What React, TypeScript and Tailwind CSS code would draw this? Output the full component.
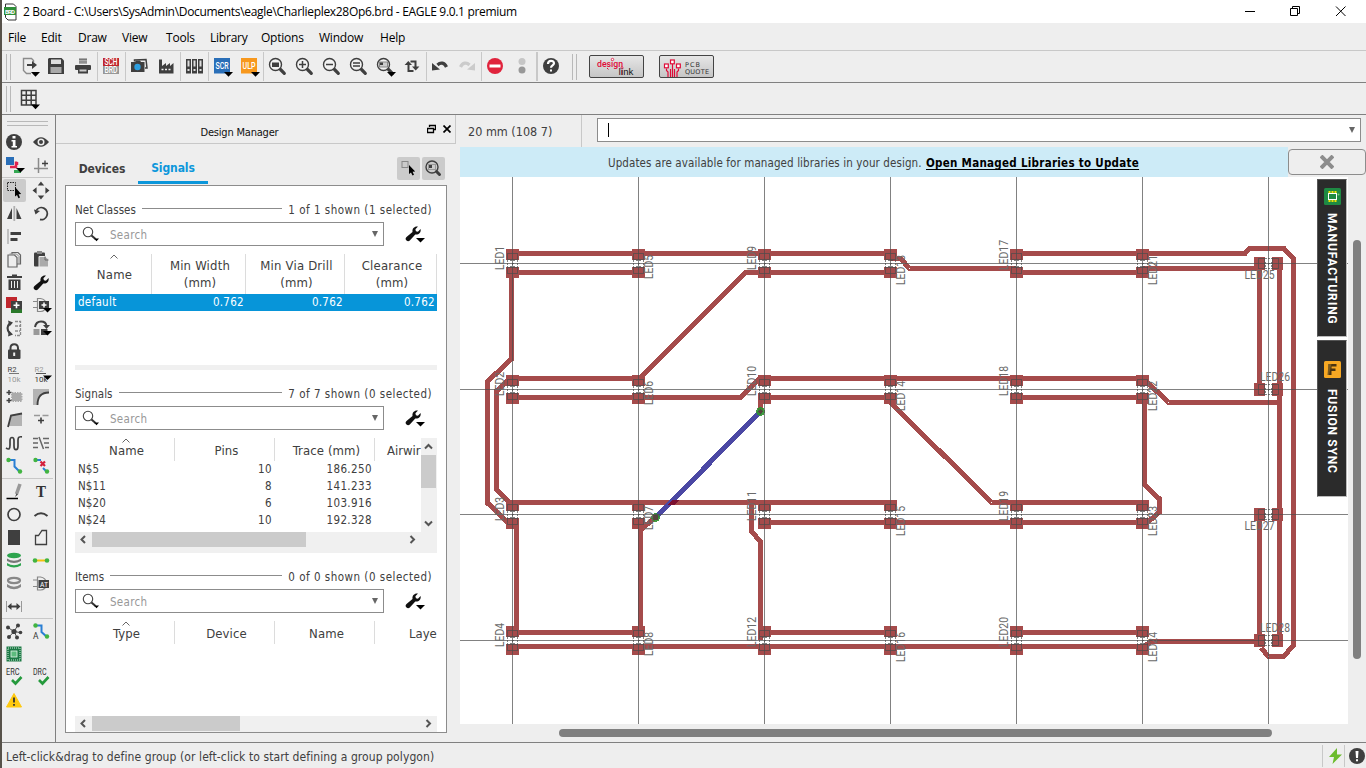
import React from "react";

type Kids = { children?: React.ReactNode };

/* ---------- icon helpers ---------- */
const DK = "#3f3f3f";

function TI({ children }: Kids) {
  return (
    <svg className="block h-[25px] w-[27px] shrink-0" viewBox="0 0 27 25" fill="none">
      {children}
    </svg>
  );
}
const Drop = ({ x = 15, y = 18 }: { x?: number; y?: number }) => (
  <path d={`M${x} ${y}h9l-4.5 4.8z`} fill="#000" />
);
const Sep = () => <div className="h-[29px] w-px bg-[#c8c8c8]" />;
const Handle = () => (
  <div className="flex h-[26px] w-[5px] justify-between">
    <div className="w-px bg-[#b9b9b9]" />
    <div className="w-px bg-[#b9b9b9]" />
  </div>
);
const Lens = ({ children }: Kids) => (
  <TI>
    <path d="M16.5 15.5l3.800 3.800" stroke={DK} strokeWidth="3.200" strokeLinecap="round" />
    <circle cx="11.500" cy="10.500" r="6" stroke={DK} strokeWidth="1.400" fill="#f2f2f2" />
    {children}
  </TI>
);
const Tag = ({ y, s }: { y: number; s: string }) => (
  <text x="6.500" y={y} fontSize="8.500" fill="#fff" fontFamily="Roboto, sans-serif" fontWeight="500" textLength="13" lengthAdjust="spacingAndGlyphs">{s}</text>
);

function MainToolbar() {
  return (
    <div className="flex h-[31px] shrink-0 items-center pl-1">
      <Handle />
      <div className="w-[5px]" />
      <TI>
        <path d="M17.500 8V6.500L15.500 4.500H7.500v12l3 3H15" stroke="#8b8b8b" strokeWidth="1.400" />
        <path d="M11 11h7" stroke={DK} strokeWidth="2" />
        <path d="M16 7l5 4-5 4z" fill={DK} />
        <Drop />
      </TI>
      <TI>
        <path d="M6 4h12.500L21 6.500V20H5V5z" fill={DK} />
        <rect x="8" y="5.500" width="10" height="4.500" fill="#ddd" />
        <rect x="7.500" y="13" width="11" height="6" fill="#a9a9a9" />
      </TI>
      <TI>
        <rect x="9" y="4" width="8" height="6" fill="#aaa" />
        <path d="M9 5.500h8M9 8h8" stroke="#777" />
        <rect x="5" y="11" width="16" height="5" rx="1" fill={DK} />
        <path d="M8 14.500h10v5H8z" fill={DK} />
        <path d="M9.500 16.500h7" stroke="#ccc" strokeWidth="2" />
      </TI>
      <Sep />
      <TI>
        <rect x="5" y="4" width="16" height="8" fill="#c0272d" />
        <rect x="5" y="12" width="16" height="8" fill="#989898" />
        <Tag y={11} s="SCH" />
        <Tag y={19} s="BRD" />
      </TI>
      <Sep />
      <TI>
        <path d="M8.500 7.500V6l11.500-.5 1 8.500h-2" stroke={DK} strokeWidth="1.500" />
        <path d="M5 8h4l1-1.500h4L15 8h3.500v10H5z" fill={DK} />
        <circle cx="11.500" cy="13" r="3.200" fill="#2d9fe0" />
      </TI>
      <TI>
        <path d="M6 5.500h3V12l4-3v3l4-3v3l3.500-3v10.500H6z" fill={DK} />
        <path d="M8.500 15.500h10" stroke="#eee" strokeWidth="1.700" strokeDasharray="2 1.500" />
      </TI>
      <Sep />
      <TI>
        {[5, 11, 17].map((x) => (
          <g key={x}>
            <rect x={x} y="5" width="5" height="14.500" fill={DK} />
            <rect x={x + 1.500} y="6.500" width="2" height="6" fill="#ddd" />
            <rect x={x + 1.500} y="15" width="2" height="2" fill="#ddd" />
          </g>
        ))}
      </TI>
      <Sep />
      <TI>
        <rect x="5" y="4" width="16" height="15.500" fill="#2a6fb8" />
        <Tag y={15} s="SCR" />
        <Drop />
      </TI>
      <TI>
        <rect x="5" y="4" width="16" height="15.500" fill="#f7981d" />
        <Tag y={15} s="ULP" />
        <Drop />
      </TI>
      <Sep />
      <Lens><rect x="8" y="8.500" width="7" height="4.500" fill={DK} /></Lens>
      <Lens><path d="M8 10.500h7M11.500 7v7" stroke={DK} strokeWidth="1.500" /></Lens>
      <Lens><path d="M8 10.500h7" stroke={DK} strokeWidth="1.500" /></Lens>
      <Lens><path d="M8 9h7M8 12h7" stroke={DK} strokeWidth="1.400" /></Lens>
      <Lens>
        <rect x="7.500" y="8" width="8" height="5" stroke="#888" fill="#ccc" />
        <rect x="8" y="8.500" width="3" height="2.500" fill={DK} />
        <Drop />
      </Lens>
      <TI>
        <path d="M11.500 7.500h5V13M14.500 17h-5v-6" stroke={DK} strokeWidth="2" />
        <path d="M13 12.500h7.400l-3.700 4zM5.600 11h7.400L9.300 7z" fill={DK} />
      </TI>
      <Sep />
      <TI>
        <path d="M19.500 13C17.500 8.500 13.500 8 10.500 11" stroke={DK} strokeWidth="3.200" />
        <path d="M5 16.500V9l8 6.500z" fill={DK} />
      </TI>
      <TI>
        <path d="M6.500 13C8.500 8.500 12.500 8 15.500 11" stroke="#cbcbcb" strokeWidth="3.200" />
        <path d="M21 16.500V9l-8 6.500z" fill="#cbcbcb" />
      </TI>
      <Sep />
      <TI>
        <circle cx="13" cy="12" r="8" fill="#e0233c" />
        <rect x="7.500" y="10.500" width="11" height="3" fill="#fff" />
      </TI>
      <TI>
        <circle cx="13" cy="7.500" r="3.500" fill="#c6c6c6" />
        <circle cx="13" cy="16" r="3.500" fill="#989898" />
      </TI>
      <div className="h-[29px] w-0.5 bg-[#c8c8c8]" />
      <TI>
        <circle cx="13" cy="12" r="8" fill={DK} />
        <path d="M10 10c0-4 6-4 6-.7 0 2.200-3 2-3 4.500" stroke="#fff" strokeWidth="2.200" />
        <rect x="12" y="15.500" width="2" height="2" fill="#fff" />
      </TI>
      <div className="w-[7px]" />
      <Handle />
      <div className="ml-[12px] flex h-[23px] w-[55px] items-center rounded-[2px] border border-[#444] bg-gradient-to-b from-[#e6e6e6] to-[#c6c6c6]">
        <svg className="block h-[21px] w-[53px]" viewBox="0 0 53 21">
          <text x="7" y="11" fontSize="9.500" fill="#df0a38" fontFamily="Roboto, sans-serif" fontWeight="500" textLength="26" lengthAdjust="spacingAndGlyphs">design</text>
          <circle cx="22.500" cy="3.500" r="1.200" fill="#fff" stroke="#df0a38" strokeWidth="0.800" />
          <circle cx="32" cy="12" r="1.100" fill="#fff" stroke="#df0a38" strokeWidth="0.800" />
          <path d="M17 12l1.500 1.500M32 14v5" stroke="#df0a38" />
          <text x="28.500" y="19" fontSize="8.500" fill="#222" fontFamily="Roboto, sans-serif" textLength="15" lengthAdjust="spacingAndGlyphs">link</text>
        </svg>
      </div>
      <div className="ml-[15px] flex h-[23px] w-[55px] items-center rounded-[2px] border border-[#444] bg-gradient-to-b from-[#e6e6e6] to-[#c6c6c6]">
        <svg className="block h-[21px] w-[53px]" viewBox="0 0 53 21" fill="none">
          <path d="M6.500 12.500v2l1.500 1.500v5M10.500 13v8M12.500 8v13M14.500 13v8M18.500 12.500v2L17 16v5" stroke="#df0a38" strokeWidth="1.200" />
          <g fill="#fff" stroke="#df0a38" strokeWidth="1.200">
            <rect x="4.500" y="8" width="3.800" height="3.800" />
            <rect x="10.500" y="4" width="3.800" height="3.800" />
            <rect x="16.500" y="8" width="3.800" height="3.800" />
          </g>
          <text x="25" y="11" fontSize="6.500" fill="#333" fontFamily="DejaVu Sans, sans-serif" textLength="15">PCB</text>
          <text x="25" y="18" fontSize="6.500" fill="#333" fontFamily="DejaVu Sans, sans-serif" textLength="24">QUOTE</text>
        </svg>
      </div>
    </div>
  );
}

/* ---------- left tool palette ---------- */
function B({ children, on }: Kids & { on?: boolean }) {
  return (
    <div className={on ? "h-[23px] w-[23px] rounded-[2px] bg-[#cbcbcb]" : "h-[23px] w-[23px]"}>
      {children ? (
        <svg className="block h-[23px] w-[23px] overflow-visible" viewBox="0 0 23 23" fill="none">
          {children}
        </svg>
      ) : null}
    </div>
  );
}
const SDrop = () => <path d="M13 14h9l-4.500 4.600z" fill="#000" />;
const WRENCH = "M4.500 18.500c-1.500-1.500-.8-2.800 0-3.500l6-5C10 6.500 12.500 4 16 4.600l-2.600 2.700.5 2 2 .5L18.600 7c.7 3.500-2 6-5.300 5.500l-5.500 6c-1 1-2.300 1-3.300 0z";
const Txt = ({ x, y, s, w, f, c }: { x: number; y: number; s: string; w: number; f: number; c: string }) => (
  <text x={x} y={y} fontSize={f} fill={c} textLength={w} lengthAdjust="spacingAndGlyphs" fontFamily="Roboto, sans-serif">{s}</text>
);

function Palette() {
  return (
    <div className="flex w-[54px] shrink-0 flex-col border-r border-[#808080]">
      <div className="ml-[5px] mr-[7px] mt-[6px] h-[5px] border-y border-[#b9b9b9]" />
      <div className="mt-[5px] grid grid-cols-[23px_23px] gap-x-1 pl-px">
        <B>
          <circle cx="11" cy="11" r="8" fill={DK} />
          <rect x="9.500" y="5" width="3" height="2.500" fill="#fff" />
          <path d="M8.500 9h4v6H14v1.500H8.500V15h1.300v-4.500H8.500z" fill="#fff" />
        </B>
        <B>
          <path d="M3 11Q11 1.500 19 11Q11 20.500 3 11z" fill={DK} />
          <circle cx="11" cy="11" r="3.500" fill="#eee" />
          <circle cx="11" cy="11" r="2" fill={DK} />
        </B>
        <B>
          <rect x="3" y="3" width="8" height="8" fill="#2a6fb8" />
          <path d="M7 13h6V7.500M14 8v3" stroke="#e0234f" strokeWidth="2.500" />
          <path d="M11 17.500h7" stroke="#34a853" strokeWidth="3" />
          <SDrop />
        </B>
        <B>
          <path d="M8.500 4v15M4 14.500h14" stroke="#8b8b8b" strokeWidth="1.500" />
          <path d="M12 9.500h6M15 6.500v6" stroke={DK} strokeWidth="1.300" />
        </B>
      </div>
      <div className="mb-px mr-0.5 h-px bg-[#c8c8c8]" />
      <div className="grid grid-cols-[23px_23px] gap-x-1 pl-px">
        <B on>
          <rect x="4.500" y="3.500" width="8" height="8" stroke="#222" strokeDasharray="1.500 1" />
          <path d="M12 8v9.500l2-1.600 1.500 3.300 1.500-.8-1.400-3.100 2.600-.3z" fill="#000" />
        </B>
        <B>
          <path d="M11 3.500l2 2.500H9zM11 19.500l2-2.500H9zM3.500 11.500L6 9.500v4zM18.500 11.500L16 9.500v4z" fill={DK} stroke={DK} strokeWidth="1.200" />
        </B>
        <B>
          <path d="M9 6v11H4zM13.500 6v11h5z" fill={DK} />
          <path d="M11.300 4v15" stroke="#b0b0b0" strokeWidth="1.800" />
        </B>
        <B>
          <path d="M6.500 8A6 6 0 1 1 10 17.500" stroke={DK} strokeWidth="1.800" />
          <path d="M4 7.500l6 1.500-4.500 3.500z" fill={DK} />
        </B>
        <B>
          <path d="M5 4v15" stroke="#b0b0b0" strokeWidth="1.500" />
          <path d="M7.500 8.500h10.500M7.500 14.500h7" stroke={DK} strokeWidth="3" />
        </B>
        <B />
        <B>
          <path d="M9 6V4.500h6l2.500 2.500v9H14M5 7h6.500L14 9.500V19H5z" stroke="#666" strokeWidth="1.200" />
          <path d="M6.500 6h7L16 8.500V16" stroke="#888" />
        </B>
        <B>
          <rect x="4" y="4.500" width="11" height="14" rx="1" fill={DK} />
          <rect x="7" y="3" width="5" height="3" fill="#888" />
          <path d="M9 8.500h6.500L18.500 11v8H9z" fill="#aaa" stroke="#eee" />
          <path d="M15 8.500V12h3.500" stroke="#666" />
        </B>
        <B>
          <path d="M4 5h15v2H4zM9 3.500h5V5H9zM5.500 8.500h12V19h-12z" fill={DK} />
          <path d="M8.500 10v7M11.500 10v7M14.500 10v7" stroke="#eee" />
        </B>
        <B><path d={WRENCH} fill="#111" /></B>
        <B>
          <rect x="3" y="3" width="11" height="11" fill="#c0272d" />
          <rect x="8" y="14" width="11" height="5" fill="#2b7a2b" />
          <rect x="8" y="7" width="11" height="8.500" fill={DK} />
          <path d="M10.500 11.200h6M13.500 8.300v6" stroke="#fff" strokeWidth="1.600" />
        </B>
        <B>
          <path d="M3 7.500h5M3 13.500h5M7.500 4.500v13h3q5 0 6.500-6.500Q15.500 5 10.500 4.500z" stroke="#888" strokeWidth="1.200" />
          <rect x="9" y="7" width="10" height="8" fill={DK} />
          <path d="M11.500 11h5M14 8.500v5" stroke="#fff" strokeWidth="1.500" />
          <SDrop />
        </B>
        <B>
          <path d="M7 6q-5 5 0 11" stroke={DK} strokeWidth="2" />
          <path d="M5 3.500l5 2-3.500 4zM5 19.500l5-2-4-4z" fill={DK} />
          <path d="M12 4.500h5.500v14H12M12 9h5M12 14h5" stroke="#8b8b8b" strokeWidth="1.300" strokeDasharray="3 1" />
        </B>
        <B>
          <path d="M5 10Q6 4.500 11 4.500T16.500 9" stroke={DK} strokeWidth="2" />
          <path d="M13 8h7l-3.500 4z" fill={DK} />
          <rect x="3.500" y="12" width="6" height="6" fill="#999" />
          <rect x="11" y="12" width="6.500" height="6" fill={DK} />
          <SDrop />
        </B>
        <B>
          <path d="M7.500 10.500V8q0-3.700 3.700-3.700T15 8v2.500" stroke={DK} strokeWidth="2" />
          <rect x="5" y="9.500" width="12.500" height="9.500" rx="1" fill={DK} />
          <path d="M11.200 12.500v3.500" stroke="#eee" strokeWidth="2" />
        </B>
        <B />
        <B>
          <Txt x={4.500} y={8.500} s="R2" w={9} f={7.500} c="#444" />
          <path d="M6 10.500h10" stroke="#777" />
          <Txt x={4.500} y={18.500} s="10k" w={13} f={8} c="#999" />
        </B>
        <B>
          <Txt x={4.500} y={8.500} s="R2" w={9} f={7.500} c="#999" />
          <path d="M6 10.500h10" stroke="#555" />
          <Txt x={4.500} y={18.500} s="10k" w={13} f={8} c="#333" />
          <path d="M13 12.500h9l-4.500 4.500z" fill="#000" />
        </B>
        <B>
          <rect x="9" y="7" width="9.500" height="8" fill="#aaa" stroke="#aaa" strokeDasharray="1.500 1" strokeWidth="2" />
          <path d="M3.500 6.500h5M6 4v5M3.500 14.500h5M6 12v5" stroke={DK} strokeWidth="1.500" />
        </B>
        <B>
          <path d="M3 19V3h16v3Q7 6 7 19z" fill="#b3b3b3" />
          <path d="M7.500 19Q7.500 6.500 19 6.500" stroke={DK} strokeWidth="1.800" />
        </B>
        <B>
          <path d="M5 17L8 6l11-2v13z" fill="#b3b3b3" />
          <path d="M5 18L8 6.500l11-2" stroke={DK} strokeWidth="1.800" />
        </B>
        <B>
          <path d="M4 6.500h6M12.500 6.500h6" stroke="#999" strokeWidth="1.300" />
          <path d="M8 11.500h6M11 8.500v6" stroke={DK} strokeWidth="1.600" />
        </B>
        <B>
          <path d="M3 16c3 2 4 1 4-3V8.500c0-4 4-4 4 0V14c0 5 4 5 4 0V8c0-3 1.500-3.500 4-3.200" stroke={DK} strokeWidth="1.700" />
        </B>
        <B>
          <path d="M3 6.500h5M3 11h5M3 15.500h5M13 6.500h6M14 11h5M15 15.500h4M9 5l4.500 12" stroke="#666" strokeWidth="1.500" />
        </B>
        <B>
          <path d="M6 5h5.500v6.500l5.500 5.500" stroke="#2a7fd4" strokeWidth="2" />
          <circle cx="5.500" cy="5" r="2.200" fill="#41b441" />
          <circle cx="17" cy="16.500" r="2.200" fill="#41b441" />
        </B>
        <B>
          <path d="M6 5h5M13 13l4 4" stroke="#2a7fd4" strokeWidth="2" />
          <circle cx="5.500" cy="5" r="2.200" fill="#41b441" />
          <circle cx="17" cy="16.500" r="2.200" fill="#41b441" />
          <path d="M10.500 6.500l4.500 4.500M15 6.500L10.500 11" stroke="#d3203a" strokeWidth="2.200" />
        </B>
      </div>
      <div className="mb-px mr-0.5 h-px bg-[#c8c8c8]" />
      <div className="grid grid-cols-[23px_23px] gap-x-1 pl-px">
        <B>
          <path d="M17 4l-3.500 10" stroke="#999" strokeWidth="3.500" />
          <path d="M13.500 13.500l-1.500 3.500 3-2.500z" fill="#444" />
          <path d="M3.500 18.500H15" stroke="#000" strokeWidth="1.500" />
        </B>
        <B>
          <text x="11" y="17" fontSize="16.500" fill="#333" textAnchor="middle" fontFamily="Liberation Serif, serif" fontWeight="700" textLength="10" lengthAdjust="spacingAndGlyphs">T</text>
        </B>
        <B><circle cx="11" cy="11.500" r="6" stroke={DK} strokeWidth="1.700" /></B>
        <B><path d="M4.500 13q6.500-5.500 13 0" stroke={DK} strokeWidth="2" /></B>
        <B><rect x="5" y="4" width="12" height="15" fill={DK} /></B>
        <B><path d="M5.500 18.500v-9h3l3.500-5h4.500v14z" stroke={DK} strokeWidth="1.300" /></B>
        <B>
          <ellipse cx="11" cy="6.500" rx="7" ry="2.800" fill="#2da44e" />
          <path d="M4 9.500q7 4.500 14 0v2.500q-7 4-14 0z" fill="#777" />
          <path d="M4 14q7 4.500 14 0v2.500q-7 4-14 0z" fill="#2da44e" />
        </B>
        <B>
          <path d="M5 11.500h12" stroke="#f4c20d" strokeWidth="2" />
          <circle cx="5" cy="11.500" r="2.300" fill="#41b441" />
          <circle cx="17" cy="11.500" r="2.300" fill="#41b441" />
        </B>
        <B>
          <path d="M4 12q7 5.500 14 0v3q-7 4.500-14 0z" fill="#888" />
          <ellipse cx="11" cy="8.500" rx="6" ry="2.600" stroke="#888" strokeWidth="2.200" />
        </B>
        <B>
          <path d="M3 8h5M3 14.500h5M7.500 5v13h3q5 0 6.500-6.500Q15.500 5.500 10.500 5z" stroke="#888" strokeWidth="1.200" />
          <rect x="8.500" y="8" width="10.500" height="8" fill={DK} />
          <Txt x={10} y={14.800} s="AT" w={8} f={7.500} c="#fff" />
        </B>
        <B>
          <path d="M3.500 6v11M18.500 6v11" stroke="#999" />
          <path d="M6 11.500h10" stroke={DK} strokeWidth="2" />
          <path d="M4.500 11.500l4-3.500v7zM17.500 11.500l-4-3.500v7z" fill={DK} />
        </B>
        <B />
      </div>
      <div className="mb-px mr-0.5 h-px bg-[#c8c8c8]" />
      <div className="grid grid-cols-[23px_23px] gap-x-1 pl-px">
        <B>
          <path d="M11 11.500L5 7.500M11 11.500L15 5M11 11.500l6 1M11 11.500L6 17M11 11.500l3 6" stroke={DK} strokeWidth="0.900" />
          <g fill={DK}>
            <circle cx="11" cy="11.500" r="2.600" /><circle cx="5" cy="7.500" r="2" /><circle cx="15" cy="5.500" r="2" />
            <circle cx="17.500" cy="12.500" r="1.800" /><circle cx="6" cy="17" r="2" /><circle cx="14" cy="17.500" r="2" />
          </g>
        </B>
        <B>
          <path d="M6 5.500h5.500V12l5.500 5" stroke="#2a7fd4" strokeWidth="2" />
          <circle cx="5.500" cy="5.500" r="2.200" fill="#41b441" />
          <circle cx="17" cy="16.500" r="2.200" fill="#41b441" />
          <Txt x={3} y={19} s="A" w={5.500} f={9} c="#333" />
        </B>
        <B>
          <rect x="3.500" y="3.500" width="15" height="15" fill="#1c7a45" />
          <rect x="5" y="5" width="12" height="12" stroke="#e5f5ea" strokeWidth="0.900" strokeDasharray="1 1" />
          <rect x="8" y="8" width="6" height="6" fill="#5dbb7d" stroke="#e5f5ea" strokeWidth="0.800" />
        </B>
        <B />
        <B>
          <Txt x={3} y={9} s="ERC" w={13.500} f={9} c="#333" />
          <path d="M9 14l3.500 3.500 6-6.500" stroke="#259a3c" strokeWidth="2.600" />
        </B>
        <B>
          <Txt x={3} y={9} s="DRC" w={13.500} f={9} c="#333" />
          <path d="M9 14l3.500 3.500 6-6.500" stroke="#259a3c" strokeWidth="2.600" />
        </B>
        <B>
          <path d="M11 4.500l7.500 13.500h-15z" fill="#ffc90e" stroke="#ffc90e" strokeWidth="1" strokeLinejoin="round" />
          <path d="M11 8.500v5M11 15v1.800" stroke="#333" strokeWidth="1.800" />
        </B>
        <B />
      </div>
    </div>
  );
}

/* ---------- design manager ---------- */
function SectionTitle({ name, info }: { name: string; info: string }) {
  return (
    <div className="flex h-4 items-center pr-[5px]">
      <span className="tracking-[0.05px]">{name}</span>
      <div className="relative -top-0.5 mx-1.5 h-px flex-1 bg-[#8c8c8c]" />
      <span className="w-[144px] whitespace-nowrap text-right tracking-[0.5px]">{info}</span>
    </div>
  );
}

function SearchRow() {
  return (
    <div className="flex h-6 items-center">
      <div className="flex h-6 w-[309px] items-center border border-[#8c8c8c] bg-white pl-[6px] pr-[5px]">
        <svg className="h-[18px] w-[20px]" viewBox="0 0 20 18" fill="none">
          <circle cx="6" cy="7" r="4.700" stroke="#444" strokeWidth="1.100" />
          <path d="M9.500 10.500l4 3.500" stroke="#333" strokeWidth="2" />
          <path d="M12 13.500h5l-2.500 2.700z" fill="#000" />
        </svg>
        <span className="ml-2 flex-1 pt-px tracking-[0.3px] text-[#989898]">Search</span>
        <svg className="h-[6px] w-[6px]" viewBox="0 0 6 6"><path d="M0 0h6L3 6z" fill="#666" /></svg>
      </div>
      <svg className="ml-[18px] h-6 w-[24px]" viewBox="0 0 24 24">
        <path d={WRENCH} fill="#111" />
        <path d="M14 16h9l-4.500 4.600z" fill="#000" />
      </svg>
    </div>
  );
}

const Caret = () => (
  <svg className="absolute left-1/2 top-0 -ml-[3px] h-[5px] w-2" viewBox="0 0 8 5" fill="none">
    <path d="M.5 4.500L4 1l3.500 3.500" stroke="#666" />
  </svg>
);
const Arr = ({ d }: { d: string }) => (
  <svg className="block h-[9px] w-[9px]" viewBox="0 0 9 9" fill="none">
    <path d={d} stroke="#555" strokeWidth="2" />
  </svg>
);
const LEFT = "M6 1L2.500 4.500 6 8";
const RIGHT = "M3.500 1L7 4.500 3.500 8";

const signals = [
  ["N$5", "10", "186.250"],
  ["N$11", "8", "141.233"],
  ["N$20", "6", "103.916"],
  ["N$24", "10", "192.328"],
];

function DesignManager() {
  const head = "flex h-[40px] flex-col items-center justify-center border-r border-[#dcdcdc] pl-[3px] text-[13px] leading-[17px] tracking-[0.2px]";
  const head2 = "relative flex h-[23px] items-center justify-center border-r border-[#dcdcdc] pl-[4px] pt-[2px] text-[13px] tracking-[0.1px]";
  return (
    <div className="flex w-[404px] shrink-0 flex-col">
      <div className="flex h-[29px] w-[400px] items-center border-b border-r border-[#c8c8c8] text-[11px] text-[#111]">
        <span className="w-[367px] pt-[8px] text-center tracking-[-0.2px]">Design Manager</span>
        <svg className="ml-[4px] h-[10px] w-[9px]" viewBox="0 0 9 10" fill="none" stroke="#000">
          <path d="M2.500 3V1.500h6v4H7M2.500 1.500h6" strokeWidth="1.300" />
          <path d="M.5 4.500h6v4h-6z" strokeWidth="1.300" />
        </svg>
        <svg className="ml-[7px] h-[8px] w-[8px]" viewBox="0 0 8 8" stroke="#000" strokeWidth="1.700">
          <path d="M.5.500l7 7M7.500.500l-7 7" />
        </svg>
      </div>
      <div className="flex h-[41px] items-end pl-[12px]">
        <div className="mr-0.5 h-[30px] w-[68px] pt-[6px] text-center text-[12px] font-bold tracking-[-0.1px]">Devices</div>
        <div className="mb-px h-[30px] w-[70px] border-b-[3px] border-[#0c97db] pt-[6px] text-center text-[12px] font-bold tracking-[-0.1px] text-[#0c97db]">Signals</div>
        <div className="mb-[5px] ml-[189px] flex gap-0.5">
          <svg className="h-[23px] w-[23px] rounded-[2px] bg-[#cbcbcb]" viewBox="0 0 23 23" fill="none">
            <rect x="5" y="4.500" width="6" height="6" stroke="#888" />
            <path d="M12 8v9l2-1.600 1.500 3 1.500-.7-1.400-2.900 2.600-.3z" fill="#000" />
          </svg>
          <svg className="h-[23px] w-[23px] rounded-[2px] bg-[#cbcbcb]" viewBox="0 0 23 23" fill="none">
            <circle cx="10" cy="10" r="6" stroke={DK} strokeWidth="1.400" />
            <path d="M14.500 14.500l3 3" stroke={DK} strokeWidth="3" strokeLinecap="round" />
            <rect x="6.500" y="7.500" width="7" height="5" stroke="#999" />
            <rect x="7" y="8" width="3" height="3" fill={DK} />
          </svg>
        </div>
      </div>
      <div className="ml-[9px] flex h-[548px] w-[382px] flex-col border border-[#8c8c8c] bg-white pl-[9px] pr-[9px] pt-[16px]">
        <SectionTitle name="Net Classes" info="1 of 1 shown (1 selected)" />
        <div className="h-[4px]" />
        <SearchRow />
        <div className="mt-2 grid grid-cols-[77px_94px_99px_92px]">
          <div className={head + " relative pt-px"}><Caret />Name</div>
          <div className={head}><span>Min Width</span><span>(mm)</span></div>
          <div className={head}><span>Min Via Drill</span><span>(mm)</span></div>
          <div className={head}><span>Clearance</span><span>(mm)</span></div>
        </div>
        <div className="grid h-[17px] grid-cols-[77px_94px_99px_92px] items-center bg-[#0795d9] pb-0.5 tracking-[0.3px] text-white">
          <span className="pl-[3px]">default</span>
          <span className="pr-[2px] text-right">0.762</span>
          <span className="pr-[2px] text-right">0.762</span>
          <span className="pr-[2px] text-right">0.762</span>
        </div>
        <div className="mt-[54px] h-[5px] bg-[#f0f0f0]" />
        <div className="h-4" />
        <SectionTitle name="Signals" info="7 of 7 shown (0 selected)" />
        <div className="h-[4px]" />
        <SearchRow />
        <div className="mt-2 flex h-[94px]">
          <div className="w-[346px] overflow-hidden">
            <div className="grid w-[400px] grid-cols-[100px_100px_100px_100px]">
              <div className={head2}><Caret />Name</div>
              <div className={head2}>Pins</div>
              <div className={head2}>Trace (mm)</div>
              <div className="flex h-[23px] items-center pl-[12px] pt-[2px] text-[13px]">Airwir</div>
            </div>
            <div className="-mt-px">
              {signals.map((r) => (
                <div key={r[0]} className="grid h-[17px] w-[400px] grid-cols-[100px_100px_100px_100px] items-center tracking-[0.4px]">
                  <span className="pl-[3px] tracking-[0.1px]">{r[0]}</span>
                  <span className="pr-[3px] text-right">{r[1]}</span>
                  <span className="pr-[3px] text-right">{r[2]}</span>
                </div>
              ))}
            </div>
          </div>
          <div className="flex w-4 flex-col items-center bg-[#f0f0f0]">
            <div className="flex h-[17px] items-center pr-px"><Arr d="M1 6.500L4.500 3 8 6.500" /></div>
            <div className="h-[33px] w-[15px] self-start bg-[#cbcbcb]" />
            <div className="mt-auto flex h-[17px] items-center pr-px"><Arr d="M1 2.500L4.500 6 8 2.500" /></div>
          </div>
        </div>
        <div className="h-[21px] bg-[#f0f0f0]">
          <div className="flex h-[15px] w-[346px] items-center">
            <div className="w-[17px] pl-1"><Arr d={LEFT} /></div>
            <div className="h-[15px] w-[214px] bg-[#cbcbcb]" />
            <div className="ml-auto w-[14px]"><Arr d={RIGHT} /></div>
          </div>
        </div>
        <div className="h-4" />
        <SectionTitle name="Items" info="0 of 0 shown (0 selected)" />
        <div className="h-[4px]" />
        <SearchRow />
        <div className="mt-2 h-[95px] overflow-hidden">
          <div className="grid w-[400px] grid-cols-[100px_100px_100px_100px]">
            <div className={head2}><Caret />Type</div>
            <div className={head2}>Device</div>
            <div className={head2}>Name</div>
            <div className="flex h-[23px] items-center pl-[34px] pt-[2px] text-[13px]">Laye</div>
          </div>
        </div>
        <div className="h-[16px] bg-[#f0f0f0]">
          <div className="flex h-[15px] items-center">
            <div className="w-[17px] pl-1"><Arr d={LEFT} /></div>
            <div className="h-[15px] w-[148px] bg-[#cbcbcb]" />
            <div className="ml-auto w-[14px]"><Arr d={RIGHT} /></div>
          </div>
        </div>
      </div>
    </div>
  );
}

/* ---------- board drawing ---------- */
const cols = [512.5, 638.5, 764.5, 890.5, 1016.5, 1142.5];
const rows = [263.5, 389.5, 514.5, 640.5];
const traces = [
  "M512 253.500H890",
  "M512 272.500H638",
  "M890 272.500H746L640 378",
  "M890 258.500H900.500L909.500 268.500H1016",
  "M1016 272.500H1142",
  "M1142 268.500H1257",
  "M1016 253.500H1245L1249.500 248.500H1284L1293.500 258.500V645.500L1283.500 656.500H1268.500L1261 648",
  "M1259.500 263V389M1279.500 263V640M1259.500 514V640",
  "M1144 379L1168.500 402.500H1279",
  "M512 378.500H638",
  "M512 397.500H740.500L759.500 378.500H1142",
  "M764 397.500H890M1016 397.500H1142",
  "M891 403L991.500 502.500H1142",
  "M512 502.500H890",
  "M764 522.500H1142",
  "M1144.500 400V484.500L1159.500 499V512L1147 523",
  "M511.500 272V359L487.500 381.500V503L508 523",
  "M508 380L496.500 391V489.500L510 502.500",
  "M516.500 520V632",
  "M655 517.500L640.500 530V632",
  "M751.500 502V531.500L760.500 541.500V640",
  "M512 632.500H638M764 632.500H890M1016 632.500H1142",
  "M512 646.500H1144L1151 641.500H1258",
  "M760.500 398V411",
];

function Led({ x, y, r }: { x: number; y: number; r?: boolean }) {
  return (
    <g transform={`translate(${x} ${y})${r ? " rotate(-90)" : ""}`}>
      <g fill="#a54b4b">
        <rect x="-6.500" y="-14.500" width="13" height="11" />
        <rect x="-6.500" y="3.500" width="13" height="11" />
      </g>
      <g stroke="#4c4c4c" fill="none" strokeOpacity="0.700">
        <rect x="-5" y="-10" width="10" height="6" />
        <rect x="-5" y="4" width="10" height="6" />
        <path d="M-5-4V4M5-4V4M-3-3h6M-3 3h6" strokeDasharray="2 1" />
        <path d="M-1 0h2M0-1v2" strokeWidth="1.500" />
      </g>
    </g>
  );
}

function Board() {
  return (
    <svg className="block h-[547px] w-[888px] bg-white" viewBox="460 177 888 547" fill="none" shapeRendering="crispEdges">
      <g stroke="#a54b4b" strokeWidth="5">
        {traces.map((d) => <path key={d} d={d} />)}
      </g>
      {cols.map((x) => rows.map((y) => <Led key={`${x}-${y}`} x={x} y={y} />))}
      {rows.map((y) => <Led key={y} x={1268.5} y={y} r />)}
      <path d="M760.500 411.500L655.500 517.500" stroke="#4b48a4" strokeWidth="5" />
      <path d="M667 505h7l5-5h-7z" fill="#7b1030" />
      <g fill="#2f8f2f" fillOpacity="0.900">
        <circle cx="760.500" cy="411.500" r="4.300" />
        <circle cx="655.500" cy="517.500" r="4.300" />
      </g>
      <g fill="#55443f">
        <circle cx="760.500" cy="411.500" r="2.300" />
        <circle cx="655.500" cy="517.500" r="2.800" />
      </g>
      <g stroke="#4c4c4c" strokeOpacity="0.700">
        {[...cols, 1268.5].map((x) => <path key={x} d={`M${x} 177V724`} />)}
        {rows.map((y) => <path key={y} d={`M460 ${y}H1348`} />)}
      </g>
      <g fill="#6a6a6a" fontFamily="Roboto, sans-serif" fontSize="12" fontWeight="400">
        {cols.map((x, c) =>
          rows.map((y, r) => {
            const n = c * 4 + r + 1;
            const bx = c % 2 === 0 ? x - 9 : x + 14.5;
            const by = c % 2 === 0 ? y + 6.5 : y + (n > 9 ? 21.5 : 15.5);
            return (
              <text key={n} transform={`translate(${bx} ${by}) rotate(-90)`} textLength={n > 9 ? 30 : 24} lengthAdjust="spacingAndGlyphs">{`LED${n}`}</text>
            );
          })
        )}
        {rows.map((y, r) => (
          <text key={y} x={r % 2 === 0 ? 1244.5 : 1260} y={r % 2 === 0 ? y + 15.5 : y - 8.5} textLength="30" lengthAdjust="spacingAndGlyphs">{`LED${25 + r}`}</text>
        ))}
      </g>
    </svg>
  );
}

function SideTab({ children, label, cls }: Kids & { label: string; cls: string }) {
  return (
    <div className={"flex w-[30px] flex-col items-center border border-[#555] border-r-[#bbb] border-b-[#bbb] bg-[#2b2b2b] " + cls}>
      {children}
      <span className="whitespace-nowrap font-['Roboto',sans-serif] text-[12px] font-bold text-white [writing-mode:vertical-rl]">{label}</span>
    </div>
  );
}

function Workspace() {
  return (
    <div className="flex min-w-0 flex-1 flex-col">
      <div className="flex h-[32px] items-center">
        <div className="flex h-[32px] w-[122px] items-center border-r border-[#c8c8c8] pl-2 pt-0.5 text-[12.500px]">20 mm (108 7)</div>
        <div className="ml-[15px] mt-[-2px] flex h-6 w-[764px] items-center justify-between border border-[#8c8c8c] bg-white pl-[10px] pr-[5px]">
          <div className="h-[14px] w-px bg-black" />
          <svg className="h-[6px] w-[6px]" viewBox="0 0 6 6"><path d="M0 0h6L3 6z" fill="#666" /></svg>
        </div>
      </div>
      <div className="flex h-[30px]">
        <div className="flex w-[828px] items-center whitespace-pre bg-[#cdebf7] pl-[148px] pt-0.5">
          <span className="w-[318px] tracking-[0.1px]">Updates are available for managed libraries in your design.</span>
          <span className="font-bold tracking-[0.28px] text-black underline underline-offset-2">Open Managed Libraries to Update</span>
        </div>
        <div className="mt-0.5 flex h-[26px] w-[78px] items-center justify-center rounded-[4px] border border-[#8c8c8c]">
          <svg className="h-[14px] w-[14px]" viewBox="0 0 14 14" stroke="#8c8c8c" strokeWidth="4"><path d="M1 1l12 12M13 1L1 13" /></svg>
        </div>
      </div>
      <div className="relative flex h-[547px]">
        <Board />
        <div className="absolute left-[857px] top-[2px] flex flex-col gap-[3px]">
          <SideTab label="MANUFACTURING" cls="h-[158px] gap-[8px] pt-[8px] tracking-[0.95px]">
            <svg className="h-[17px] w-[17px] shrink-0" viewBox="0 0 17 17" fill="none">
              <rect width="17" height="17" rx="1.500" fill="#1e8a43" />
              <path d="M5.500 3v11M8.500 3v11M11.500 3v11" stroke="#f2e205" strokeWidth="2" />
              <rect x="4.500" y="5.500" width="8" height="6" fill="#1e8a43" stroke="#fff" />
              <circle cx="14.500" cy="6.500" r="1" fill="#7c7" />
            </svg>
          </SideTab>
          <SideTab label="FUSION SYNC" cls="h-[157px] gap-[11px] pt-[20px] tracking-[0.75px]">
            <svg className="h-[17px] w-[17px] shrink-0" viewBox="0 0 17 17">
              <rect width="17" height="17" rx="1.500" fill="#f7a823" />
              <path d="M4.500 3h8v2.500h-5v2h4V10h-4v4h-3z" fill="#4a3310" />
              <path d="M7.500 3L5 14H3.500l1-11z" fill="#7a5a20" />
            </svg>
          </SideTab>
        </div>
        <div className="flex-1 pl-[5px] pt-[63px]"><div className="h-[419px] w-2 rounded-full bg-[#808080]" /></div>
      </div>
      <div className="pl-[99px] pt-[5px]"><div className="h-2 w-[713px] rounded-full bg-[#808080]" /></div>
    </div>
  );
}

const menu: [string, string][] = [
  ["File", "w-[33px]"], ["Edit", "w-[37px]"], ["Draw", "w-[44px]"], ["View", "w-[44px]"], ["Tools", "w-[44px]"],
  ["Library", "w-[51px]"], ["Options", "w-[58px]"], ["Window", "w-[61px]"], ["Help", "w-[40px]"],
];

export default function App() {
  return (
    <div className="flex h-[768px] w-[1366px] overflow-hidden bg-[#eeeeee] font-['DejaVu_Sans_Condensed','DejaVu_Sans',sans-serif] text-[11.500px] leading-4 text-[#404040]">
      <div className="w-0.5 shrink-0 bg-[#57524a]" />
      <div className="flex w-[1364px] flex-col">
        <div className="flex h-[23px] shrink-0 items-center bg-white pl-0.5 font-['Open_Sans',sans-serif] text-[12px] text-black">
          <svg className="h-[18px] w-[14px]" viewBox="0 0 14 18">
            <path d="M1.500 1h8L12 3.500V17H4l-2.500-2.500z" fill="#fff" stroke="#333" />
            <path d="M0 4h12v8H0z" fill="#2f8f3a" />
            <text x="1" y="10.500" fontSize="6" fill="#fff" fontWeight="700" fontFamily="Roboto, sans-serif" textLength="10">BRD</text>
          </svg>
          <span className="ml-[5px] flex-1 whitespace-pre tracking-[-0.31px]">2 Board - C:\Users\SysAdmin\Documents\eagle\Charlieplex28Op6.brd - EAGLE 9.0.1 premium</span>
          <svg className="mr-[20px] h-[12px] w-[104px]" viewBox="0 0 104 12" fill="none" stroke="#000">
            <path d="M3 5.500h10" />
            <path d="M48.500 2.500h7v7h-7zM50.500 2.500V.5h7v7H56" />
            <path d="M94 .5l9.500 9.500M103.500.5L94 10" />
          </svg>
        </div>
        <div className="flex h-[28px] shrink-0 items-center border-b border-[#c8c8c8] pl-1.5 pt-0.5 font-['Open_Sans',sans-serif] text-[12px] tracking-[-0.22px] text-black">
          {menu.map(([m, w]) => <div key={m} className={w}>{m}</div>)}
        </div>
        <MainToolbar />
        <div className="flex h-[33px] shrink-0 items-center border-y border-[#808080] pl-1">
          <Handle />
          <div className="w-[5px]" />
          <TI>
            <path d="M5.500 4.500h14.500v14.500H5.500zM10.300 4.500v14.500M15.200 4.500v14.500M5.500 9.300h14.500M5.500 14.200h14.500" stroke={DK} strokeWidth="1.500" />
            <Drop x={15} y={18.500} />
          </TI>
        </div>
        <div className="flex h-[627px] shrink-0">
          <Palette />
          <DesignManager />
          <Workspace />
        </div>
        <div className="flex h-[26px] shrink-0 items-center border-t border-[#808080] pl-1">
          <span className="flex-1 pt-0.5 text-[12px] tracking-[0.09px]">Left-click&amp;drag to define group (or left-click to start defining a group polygon)</span>
          <div className="flex h-[22px] w-[22px] items-center justify-center border-l border-[#c8c8c8] pl-[3px]">
            <svg className="h-[16px] w-[13px]" viewBox="0 0 13 16"><path d="M8 0L0 9h5l-1.500 7L13 6.500H8z" fill="#6cbb2d" /></svg>
          </div>
          <div className="flex h-[22px] w-[22px] items-center justify-end border-l border-[#c8c8c8] pr-px">
            <svg className="h-4 w-4" viewBox="0 0 16 16">
              <circle cx="8" cy="8" r="8" fill={DK} />
              <path d="M6.500 3h3L9 10H7zM7 11.200h2v2H7z" fill="#fff" />
            </svg>
          </div>
        </div>
      </div>
    </div>
  );
}
